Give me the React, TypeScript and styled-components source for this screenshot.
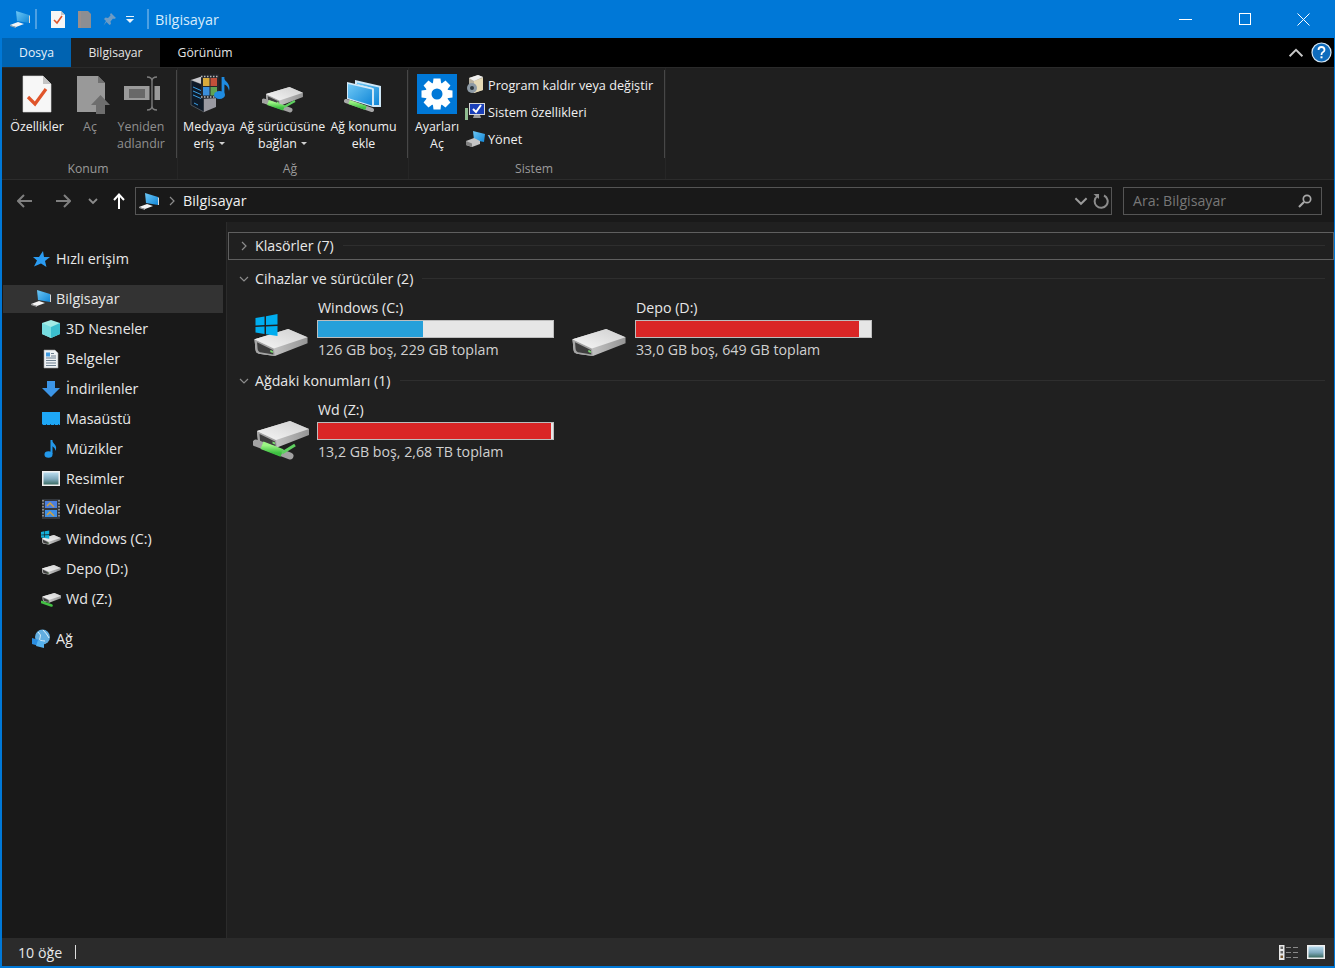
import React from "react";
import styled, { createGlobalStyle } from "styled-components";

const GlobalStyle = createGlobalStyle`
  html, body {
    margin: 0;
    padding: 0;
    background: #0078d7;
    font-family: "Open Sans", "Noto Sans", sans-serif;
    overflow: hidden;
  }
  * { box-sizing: border-box; }
  svg { display: block; flex: none; }
`;

const Window = styled.div`
  width: 1335px;
  height: 968px;
  display: flex;
  flex-direction: column;
  border-left: 2px solid #0078d7;
  border-right: 1px solid #0078d7;
  border-bottom: 2px solid #0078d7;
  background: #202020;
  color: #e8e8e8;
`;

/* title bar */
const TitleBar = styled.div`
  height: 38px;
  margin-left: -2px;
  margin-right: -1px;
  background: #0078d7;
  display: flex;
  align-items: center;
  flex: none;
`;
const QuickTools = styled.div`
  display: flex;
  align-items: center;
  padding-left: 10px;
`;
const TitleSep = styled.div<{ $l: number; $r: number }>`
  width: 2px;
  height: 20px;
  margin: 0 ${(p) => p.$r}px 0 ${(p) => p.$l}px;
  background: #4da0e3;
`;
const ToolSlot = styled.div<{ $w: number }>`
  width: ${(p) => p.$w}px;
  display: flex;
  justify-content: center;
`;
const TitleText = styled.div`
  flex: 1;
  font-size: 14.4px;
  color: #d6ebfb;
`;
const WinButtons = styled.div`
  display: flex;
  padding-right: 2px;
`;
const WinButton = styled.div`
  width: 59px;
  height: 38px;
  display: flex;
  align-items: center;
  justify-content: center;
`;

/* tabs */
const TabStrip = styled.div`
  height: 29px;
  flex: none;
  background: #000;
  display: flex;
  align-items: stretch;
  font-size: 12.2px;
`;
const Tab = styled.div<{ $kind?: "file" | "active"; $w: number }>`
  width: ${(p) => p.$w}px;
  display: flex;
  align-items: center;
  justify-content: center;
  color: ${(p) => (p.$kind === "file" ? "#e6f1fa" : "#e4e4e4")};
  background: ${(p) =>
    p.$kind === "file" ? "#0063b1" : p.$kind === "active" ? "#1f1f1f" : "#000"};
`;
const TabSpacer = styled.div`
  flex: 1;
`;
const TabRight = styled.div`
  display: flex;
  align-items: center;
  gap: 7px;
  padding-right: 2px;
`;

/* ribbon */
const Ribbon = styled.div`
  height: 113px;
  flex: none;
  background: #1f1f1f;
  border-top: 1px solid #2a2a2a;
  border-bottom: 1px solid #2c2c2c;
  display: flex;
`;
const Group = styled.div<{ $w: number }>`
  width: ${(p) => p.$w}px;
  display: flex;
  flex-direction: column;
  border-right: 1px solid #262626;
`;
const GroupBody = styled.div<{ $pad: number }>`
  height: 88px;
  margin-top: 2px;
  padding-left: ${(p) => p.$pad}px;
  display: flex;
  border-right: 1px solid #474747;
`;
const GroupLabel = styled.div<{ $shift: number }>`
  height: 21px;
  display: flex;
  align-items: center;
  justify-content: center;
  padding-right: ${(p) => p.$shift}px;
  font-size: 12.2px;
  color: #9a9a9a;
`;
const LargeButton = styled.div<{ $w: number; $dim?: boolean }>`
  width: ${(p) => p.$w}px;
  display: flex;
  flex-direction: column;
  align-items: center;
  font-size: 12.4px;
  line-height: 17px;
  text-align: center;
  white-space: nowrap;
  color: ${(p) => (p.$dim ? "#8f8f8f" : "#f0f0f0")};
`;
const LargeIcon = styled.div`
  height: 48px;
  padding-top: 4px;
`;
const Caret = styled.span`
  display: inline-block;
  width: 0;
  height: 0;
  margin: 0 0 3px 4px;
  border-left: 3px solid transparent;
  border-right: 3px solid transparent;
  border-top: 3px solid #d0d0d0;
`;
const SmallColumn = styled.div`
  display: flex;
  flex-direction: column;
  padding: 1px 0 0 3px;
`;
const SmallButton = styled.div`
  height: 27px;
  display: flex;
  align-items: center;
  gap: 3px;
  font-size: 12.7px;
  color: #f0f0f0;
  white-space: nowrap;
`;

/* address bar */
const AddressRow = styled.div`
  height: 42px;
  flex: none;
  background: #191919;
  display: flex;
  align-items: center;
  padding-right: 12px;
`;
const NavButtons = styled.div`
  width: 133px;
  padding-left: 15px;
  display: flex;
  align-items: center;
`;
const NavSlot = styled.div<{ $w: number }>`
  width: ${(p) => p.$w}px;
`;
const AddressBox = styled.div`
  width: 977px;
  height: 28px;
  border: 1px solid #555;
  display: flex;
  align-items: center;
  padding: 0 2px 0 3px;
  font-size: 14.3px;
  color: #f0f0f0;
`;
const AddressText = styled.div`
  flex: 1;
  padding: 0 0 2px 6px;
`;
const SearchBox = styled.div`
  width: 199px;
  height: 28px;
  margin-left: 11px;
  border: 1px solid #555;
  display: flex;
  align-items: center;
  justify-content: space-between;
  padding: 0 9px 1px;
  font-size: 14.2px;
  color: #777;
`;

/* main area */
const Main = styled.div`
  flex: 1;
  display: flex;
  min-height: 0;
`;
const Sidebar = styled.div`
  width: 225px;
  flex: none;
  background: #191919;
  border-right: 1px solid #2b2b2b;
  padding-top: 22px;
  display: flex;
  flex-direction: column;
`;
const NavSection = styled.div`
  margin-bottom: 10px;
`;
const NavRow = styled.div<{ $level: number; $selected?: boolean }>`
  height: 30px;
  display: flex;
  align-items: center;
  gap: 5px;
  padding-left: ${(p) => (p.$level === 1 ? 28 : 38)}px;
  padding-bottom: 1px;
  font-size: 14.3px;
  color: #e8e8e8;
  width: 220px;
  background: ${(p) =>
    p.$selected
      ? "linear-gradient(#191919 1px, #333 1px, #333 29px, #191919 29px)"
      : "none"};
  margin-left: 1px;
`;
const Content = styled.div`
  flex: 1;
  padding: 10px 0 0 1px;
  display: flex;
  flex-direction: column;
`;
const GroupHeader = styled.div<{ $framed?: boolean }>`
  height: 28px;
  flex: none;
  display: flex;
  align-items: center;
  padding: 0 8px 1px 10px;
  gap: 6px;
  font-size: 14.2px;
  color: #e8e8e8;
  border: 1px solid ${(p) => (p.$framed ? "#5f5f5f" : "transparent")};
  margin-bottom: 5px;
`;
const HeaderLine = styled.div`
  flex: 1;
  height: 1px;
  margin-left: 3px;
  background: #2e2e2e;
`;
const Tiles = styled.div`
  display: flex;
  margin-bottom: 7px;
  padding-left: 25px;
`;
const Tile = styled.div`
  width: 318px;
  height: 62px;
  display: flex;
`;
const TileIcon = styled.div`
  width: 64px;
  flex: none;
  padding-top: 15px;
`;
const TileText = styled.div`
  width: 237px;
  font-size: 14.2px;
  line-height: 20px;
  color: #e8e8e8;
`;
const TileName = styled.div`
  padding-left: 1px;
`;
const TileInfo = styled.div`
  padding-left: 1px;
  margin-top: 2px;
  color: #d0d0d0;
`;
const UsageBar = styled.div`
  height: 18px;
  margin-top: 2px;
  border: 1px solid #bdbdbd;
  background: #e6e6e6;
`;
const UsageFill = styled.div<{ $pct: number; $full?: boolean }>`
  height: 100%;
  width: ${(p) => p.$pct}%;
  background: ${(p) => (p.$full ? "#da2626" : "#26a0da")};
`;

/* status bar */
const StatusBar = styled.div`
  height: 28px;
  flex: none;
  background: #2b2b2b;
  display: flex;
  align-items: center;
  padding: 0 9px 0 16px;
  font-size: 14.2px;
  color: #e8e8e8;
`;
const StatusCaret = styled.div`
  width: 1px;
  height: 14px;
  background: #ddd;
  margin-left: 13px;
`;
const StatusSpacer = styled.div`
  flex: 1;
`;
const StatusViews = styled.div`
  display: flex;
  align-items: center;
  gap: 9px;
`;

/* drawings */
const Defs = styled.svg`
  position: absolute;
  width: 0;
  height: 0;
`;

const SharedDefs = () => (
  <Defs>
    <defs>
      <linearGradient id="screen" x1="0" y1="0" x2="1" y2="1">
        <stop offset="0" stopColor="#6fc8f5" />
        <stop offset="1" stopColor="#1187d8" />
      </linearGradient>
      <linearGradient id="driveTop" x1="0" y1="1" x2="1" y2="0">
        <stop offset="0" stopColor="#f6f6f6" />
        <stop offset="1" stopColor="#cfcfcf" />
      </linearGradient>
      <linearGradient id="driveSide" x1="0" y1="0" x2="1" y2="0">
        <stop offset="0" stopColor="#dcdcdc" />
        <stop offset="1" stopColor="#959595" />
      </linearGradient>
      <linearGradient id="pipe" x1="0" y1="0" x2="0" y2="1">
        <stop offset="0" stopColor="#9cf585" />
        <stop offset="1" stopColor="#3cbf40" />
      </linearGradient>
      <linearGradient id="sky" x1="0" y1="0" x2="0" y2="1">
        <stop offset="0" stopColor="#b9dcef" />
        <stop offset="0.55" stopColor="#7fa9bd" />
        <stop offset="1" stopColor="#3d6d63" />
      </linearGradient>
    </defs>
  </Defs>
);

// isometric drive body, 52 wide by 27 high
const DriveBody = () => (
  <g>
    <path d="M0 10 33 0 52 8 52 14 20 26.500 6 24.500Q1 24 1 20Z" fill="url(#driveSide)" />
    <path d="M0 10 19 19 20 26.500 6 24.500Q1 24 1 20Z" fill="#a4a4a4" />
    <path d="M2.500 13 18 20.500 18.500 25 7 23Q3 22.500 3 19Z" fill="#3e3e3e" />
    <path d="M0 10 33 0 52 8 19 19Z" fill="url(#driveTop)" />
    <path d="M15.500 20.500 18 21.500 18 23.500 15.500 22.500Z" fill="#7ddc72" />
  </g>
);

const WindowsPanes = () => (
  <g fill="#00adef" transform="translate(1.500 0)">
    <path d="M1 5 10 3.500 10 12 1 12.500Z" />
    <path d="M11.500 3.200 23 1 23 11.500 11.500 12Z" />
    <path d="M1 14 10 13.500 10 21 1 19.500Z" />
    <path d="M11.500 13.500 23 13 23 23 11.500 21.200Z" />
  </g>
);

const Pipe = () => (
  <g>
    <path d="M3 28 37 41" stroke="#a2a2a2" strokeWidth="7" strokeLinecap="round" />
    <path d="M9 30.300 29 38" stroke="url(#pipe)" strokeWidth="8" />
    <path d="M29 38 42 30" stroke="#5fd060" strokeWidth="3" />
  </g>
);

const BigDrive = ({ kind }: { kind: "win" | "plain" | "net" }) => (
  <svg width="60" height="46" viewBox="0 0 60 46">
    {kind === "net" ? (
      <>
        <g transform="translate(4 6)">
          <DriveBody />
        </g>
        <Pipe />
      </>
    ) : (
      <>
        <g transform="translate(1.500 16) scale(1.02)">
          <DriveBody />
        </g>
        {kind === "win" && <WindowsPanes />}
      </>
    )}
  </svg>
);

const ComputerIcon = ({ size = 20 }: { size?: number }) => (
  <svg width={size} height={size * 0.85} viewBox="0 0 20 17">
    <path d="M6 0 19 4 19 12 7 10Z" fill="url(#screen)" />
    <path d="M19 4 20 5 20 12 19 12Z" fill="#d8d8d8" />
    <path d="M0 14 8 11 14 13 6 16Z" fill="#f4f4f4" />
    <path d="M0 14 6 16 6 17 0 15Z" fill="#a8a8a8" />
  </svg>
);

const DocCheckIcon = () => (
  <svg width="14" height="17" viewBox="0 0 14 17">
    <path d="M0 0H10L14 4V17H0Z" fill="#f6f6f6" />
    <path d="M10 0V4H14Z" fill="#c4c4c4" />
    <path d="M3 9 6 12 11 5" fill="none" stroke="#e0552b" strokeWidth="1.600" />
  </svg>
);

const GreyDocIcon = () => (
  <svg width="13" height="17" viewBox="0 0 13 17">
    <path d="M0 0H10L13 3V17H0Z" fill="#8c8e92" />
    <path d="M0 0H3V17H0Z" fill="#9a8f8c" />
  </svg>
);

const PinIcon = () => (
  <svg width="13" height="13" viewBox="0 0 13 13">
    <path d="M8 0 13 5 11 6 10 5.500 7.500 8.500 8 11 6.500 12 3.500 9 0.500 12.500 3 8 1 6 2.500 4.500 5 5 7.500 2.500 7 1.500Z" fill="#6f9cc4" />
  </svg>
);

const QuickDropIcon = () => (
  <svg width="8" height="7" viewBox="0 0 8 7">
    <path d="M0 .5H8" stroke="#e8f3fc" strokeWidth="1" />
    <path d="M0 3H8L4 7Z" fill="#e8f3fc" />
  </svg>
);

const PropertiesLarge = () => (
  <svg width="40" height="40" viewBox="0 0 40 40">
    <path d="M6 2H26L34 10V38H6Z" fill="#f7f7f7" stroke="#d8d8d8" strokeWidth=".6" />
    <path d="M26 2V10H34Z" fill="#c4c4c4" />
    <path d="M11 23 18 30 29 15" fill="none" stroke="#e0552b" strokeWidth="3.200" />
  </svg>
);

const OpenLarge = () => (
  <svg width="40" height="40" viewBox="0 0 40 40">
    <path d="M7 2H28L35 9V38H7Z" fill="#999" />
    <path d="M28 2V9H35Z" fill="#707070" />
    <path d="M21 31 30.500 21 40 31H35V40H26V31Z" fill="#6e6e6e" />
  </svg>
);

const RenameLarge = () => (
  <svg width="40" height="40" viewBox="0 0 40 40">
    <path d="M3 12H39V26H3Z" fill="#9a9a9a" />
    <path d="M8 15H24V24H8Z" fill="#686868" />
    <path d="M31 5V35" stroke="#1f1f1f" strokeWidth="5" />
    <path d="M26 3Q31 3 31 7V32Q31 36 26 36M36 3Q31 3 31 7V32Q31 36 36 36" fill="none" stroke="#7d7d7d" strokeWidth="1.400" />
  </svg>
);

const MediaLarge = () => (
  <svg width="42" height="40" viewBox="0 0 42 40">
    <path d="M3 6 16 11V38L3 31Z" fill="#0f1a28" stroke="#5a5f66" strokeWidth=".8" />
    <path d="M16 11 28 7V33L16 38Z" fill="#9a9aa2" />
    <path d="M3 6 15 2 28 7 16 11Z" fill="#c8c8cc" />
    <path d="M5 13 13 16.500M5 17 13 20.500M5 21 13 24.500M6 29 10 31" stroke="#3aa0e6" strokeWidth="1" />
    <path d="M13 1 31 0V24L13 25Z" fill="#24272c" />
    <path d="M13 2.500H31M13 23H31" stroke="#b8b8b8" strokeWidth="1.400" strokeDasharray="1.500 1.500" />
    <path d="M15 4H21.500V12H15Z" fill="#d9a93a" />
    <path d="M22.500 4H29V12H22.500Z" fill="#c2503a" />
    <path d="M15 13H21.500V21.500H15Z" fill="#3b8fdc" />
    <path d="M22.500 13H29V21.500H22.500Z" fill="#5fa354" />
    <path d="M35 3V21" stroke="#1f8be0" strokeWidth="2.800" />
    <path d="M35 3C37 8 43 9 41 17 40 12 38 11 35 10Z" fill="#1f8be0" />
    <ellipse cx="31.500" cy="21" rx="5.500" ry="4" fill="#1f8be0" />
  </svg>
);

const NetDriveLarge = () => (
  <svg width="42" height="40" viewBox="0 0 42 40">
    <g transform="translate(4 13) scale(.71)">
      <DriveBody />
    </g>
    <path d="M2 27 28 36" stroke="#a2a2a2" strokeWidth="5" strokeLinecap="round" />
    <path d="M6 28.500 22 34" stroke="url(#pipe)" strokeWidth="5.500" />
    <path d="M22 33 33 27" stroke="#5fd060" strokeWidth="2" />
  </svg>
);

const NetPlaceLarge = () => (
  <svg width="40" height="40" viewBox="0 0 40 40">
    <path d="M11 6 37 12V33H29V15L11 10Z" fill="#cfe7f6" />
    <path d="M13 8.500 35 13.500V31H30V14.500L13 10Z" fill="url(#screen)" />
    <path d="M3 8 29 14V33L3 25Z" fill="#d3e9f7" />
    <path d="M4 10 28 15.500V31.500L4 24Z" fill="url(#screen)" />
    <path d="M2 27 28 36" stroke="#a8a8a8" strokeWidth="4" strokeLinecap="round" />
    <path d="M5 28 22 34" stroke="url(#pipe)" strokeWidth="4.500" />
  </svg>
);

const SettingsTile = () => (
  <svg width="40" height="40" viewBox="0 0 40 40">
    <rect width="40" height="40" fill="#0078d7" />
    <g transform="translate(20 20)" fill="#fff">
      {[0, 45, 90, 135, 180, 225, 270, 315].map((a) => (
        <path key={a} d="M-3.500 -15.500H3.500L4.500 -8H-4.500Z" transform={`rotate(${a})`} />
      ))}
    </g>
    <circle cx="20" cy="20" r="8.500" fill="none" stroke="#fff" strokeWidth="6" />
  </svg>
);

const UninstallIcon = () => (
  <svg width="20" height="19" viewBox="0 0 20 19">
    <path d="M4 3 13 0 18 2 18 15 9 18 4 16Z" fill="#b9b2a0" />
    <path d="M9 6 18 3 18 15 9 18Z" fill="#e5d9b5" />
    <path d="M4 3 13 0 18 2 9 6Z" fill="#eeeeee" />
    <circle cx="7" cy="13" r="5" fill="#8d9aa5" />
    <circle cx="7" cy="13" r="2" fill="#2f3940" />
  </svg>
);

const SystemIcon = () => (
  <svg width="20" height="19" viewBox="0 0 20 19">
    <path d="M4 1H20V13H4Z" fill="#d8d8d8" />
    <path d="M5 2H19V12H5Z" fill="#1a3fb8" />
    <path d="M8 7 11 10 16 3" fill="none" stroke="#fff" strokeWidth="2" />
    <path d="M9 13H15L16 16H8Z" fill="#9a9a9a" />
    <path d="M0 6H3V18H0Z" fill="#8fbc8f" />
  </svg>
);

const ManageIcon = () => (
  <svg width="20" height="18" viewBox="0 0 20 18">
    <path d="M8 1 20 4 19 12 9 10Z" fill="url(#screen)" />
    <path d="M1 11 9 8 15 11 15 14 7 17 1 15Z" fill="#c4c4c4" />
    <path d="M1 11 7 13.500 7 17 1 15Z" fill="#808080" />
  </svg>
);

const BackArrow = ({ flip, color = "#7f7f7f" }: { flip?: boolean; color?: string }) => (
  <svg width="16" height="14" viewBox="0 0 16 14" transform={flip ? "scale(-1 1)" : undefined}>
    <path d="M1 7H15M7 1 1 7 7 13" fill="none" stroke={color} strokeWidth="2" />
  </svg>
);

const Chevron = ({
  dir,
  color,
  size = 10,
  weight = 1.2,
}: {
  dir: "down" | "right" | "up";
  color: string;
  size?: number;
  weight?: number;
}) => (
  <svg width={size} height={size} viewBox="0 0 10 10">
    <path
      d={dir === "down" ? "M1 3 5 7 9 3" : dir === "up" ? "M1 7 5 3 9 7" : "M3 1 7 5 3 9"}
      fill="none"
      stroke={color}
      strokeWidth={weight}
    />
  </svg>
);

const UpArrow = () => (
  <svg width="12" height="16" viewBox="0 0 12 16">
    <path d="M6 16V2M1 7 6 1.500 11 7" fill="none" stroke="#fff" strokeWidth="2" />
  </svg>
);

const RefreshIcon = () => (
  <svg width="16" height="16" viewBox="0 0 16 16">
    <path d="M4.500 3A6.500 6.500 0 1 0 11 2.500" fill="none" stroke="#8c8c8c" strokeWidth="2" />
    <path d="M1.500 1 7 1 7 6Z" fill="#8c8c8c" transform="translate(-1 0)" />
  </svg>
);

const SearchGlyph = () => (
  <svg width="14" height="14" viewBox="0 0 14 14">
    <circle cx="9" cy="5" r="3.700" fill="none" stroke="#a8a8a8" strokeWidth="1.700" />
    <path d="M6 8 1 13" stroke="#a8a8a8" strokeWidth="2.200" />
  </svg>
);

const HelpBadge = () => (
  <svg width="21" height="21" viewBox="0 0 21 21">
    <circle cx="10.500" cy="10.500" r="9.500" fill="#0f6cbd" stroke="#d3e6f5" strokeWidth="1.200" />
    <path d="M7.500 8Q7.500 5 10.500 5T13.500 8Q13.500 9.500 11.500 10.500 10.500 11 10.500 13" fill="none" stroke="#fff" strokeWidth="1.800" />
    <rect x="9.500" y="14.300" width="2" height="2" fill="#fff" />
  </svg>
);

const StarIcon = () => (
  <svg width="20" height="20" viewBox="0 0 20 20">
    <path d="M12 2 13 8 19 8 14 12 15.500 18 10 14.500 3 17.500 6 11.500 2 8 8 8Z" fill="#2b9cf2" />
  </svg>
);

const CubeIcon = () => (
  <svg width="20" height="20" viewBox="0 0 20 20">
    <path d="M10 1 19 4 19 15 10 19 1 15 1 4Z" fill="#a2ece6" />
    <path d="M10 8 19 4 19 15 10 19Z" fill="#3bbfce" />
    <path d="M10 8 1 4 1 15 10 19Z" fill="#76dde0" />
  </svg>
);

const PaperIcon = () => (
  <svg width="20" height="20" viewBox="0 0 20 20">
    <path d="M3 1H14L17 4V19H3Z" fill="#eef2f5" stroke="#9a9a9a" strokeWidth=".6" />
    <path d="M5 9H15M5 11.500H15M5 14H15M5 16.500H15M10 4.500H13M10 7H15" stroke="#6d7f8f" strokeWidth="1" />
    <rect x="5" y="3.500" width="4" height="4" fill="#3f9ae0" />
  </svg>
);

const DownloadIcon = () => (
  <svg width="20" height="20" viewBox="0 0 20 20">
    <path d="M6 2H14V9H19L10 18 1 9H6Z" fill="#3c95e6" />
  </svg>
);

const DesktopIcon = () => (
  <svg width="20" height="20" viewBox="0 0 20 20">
    <path d="M1 3H19V16H1Z" fill="#1ea7f5" />
    <path d="M1 15.500H19" stroke="#10497a" strokeWidth="1" strokeDasharray="1 3" />
  </svg>
);

const NoteIcon = () => (
  <svg width="20" height="20" viewBox="0 0 20 20">
    <path d="M10.500 1V15" stroke="#2398ea" strokeWidth="2" />
    <path d="M10.500 1C12 5 17 6 14.500 12 14 8.500 12 7.500 10.500 7Z" fill="#2398ea" />
    <ellipse cx="7.500" cy="15.500" rx="4" ry="3.300" fill="#2398ea" />
  </svg>
);

const PictureIcon = () => (
  <svg width="20" height="20" viewBox="0 0 20 20">
    <rect x="1" y="2" width="18" height="15" fill="#f0f0f0" />
    <rect x="2.500" y="3.500" width="15" height="12" fill="url(#sky)" />
  </svg>
);

const FilmIcon = () => (
  <svg width="20" height="20" viewBox="0 0 20 20">
    <rect x="1" y="0" width="18" height="20" fill="#33373d" />
    <path d="M2 1V19M18 1V19" stroke="#8a8a8a" strokeWidth="2" strokeDasharray="1.500 1.500" />
    <rect x="4" y="2" width="12" height="7" fill="#4a7fe0" />
    <rect x="4" y="11" width="12" height="7" fill="#3f8fe6" />
    <path d="M6 7 9 4 13 8M6 16 9 13 13 17" stroke="#d3a03c" strokeWidth="1.500" fill="none" />
  </svg>
);

const SmallDrive = ({ kind }: { kind: "win" | "plain" | "net" }) => (
  <svg width="20" height="20" viewBox="0.500 0 20 20">
    <g transform={kind === "net" ? "translate(2 4) scale(.36)" : "translate(1.500 6) scale(.36)"}>
      <DriveBody />
    </g>
    {kind === "win" && (
      <g transform="translate(0 1) scale(.38)">
        <path d="M1 5 10 3.500 10 12 1 12.500ZM11.500 3.200 23 1 23 11.500 11.500 12ZM1 14 10 13.500 10 21 1 19.500ZM11.500 13.500 23 13 23 23 11.500 21.200Z" fill="#15b0d8" />
      </g>
    )}
    {kind === "net" && <path d="M1 13 11 16.500" stroke="#43c044" strokeWidth="2.500" strokeLinecap="round" />}
  </svg>
);

const NetworkIcon = () => (
  <svg width="20" height="20" viewBox="0 0 20 20">
    <circle cx="11.500" cy="8" r="7.500" fill="#62aee0" />
    <path d="M7 3Q11 6 9 9T14 12M12 1Q16 5 18 9" fill="none" stroke="#d8eefa" strokeWidth="1" />
    <path d="M1 9 8 11V17L1 15Z" fill="#2a8de0" />
    <path d="M5 17 13 19 13 13 7 11Z" fill="#55b2ef" />
  </svg>
);

const DetailsViewIcon = () => (
  <svg width="19" height="15" viewBox="0 0 19 15">
    <rect x="0" y="0" width="5.500" height="15" fill="#e8e8e8" />
    <rect x="1.500" y="1.500" width="2.500" height="2.500" fill="#666" />
    <rect x="1.500" y="6" width="2.500" height="2.500" fill="#666" />
    <rect x="1.500" y="10.500" width="2.500" height="2.500" fill="#7a5a32" />
    <path d="M7 2.500H12M14 2.500H19M7 7.500H12M14 7.500H19M7 12.500H12M14 12.500H19" stroke="#8a8a8a" strokeWidth="1" />
  </svg>
);

const TilesViewIcon = () => (
  <svg width="18" height="14" viewBox="0 0 18 14">
    <rect width="18" height="14" fill="#f0f0f0" />
    <rect x="1.500" y="1.500" width="15" height="11" fill="url(#sky)" />
  </svg>
);

const navItems: { label: string; icon: React.ReactNode }[] = [
  { label: "3D Nesneler", icon: <CubeIcon /> },
  { label: "Belgeler", icon: <PaperIcon /> },
  { label: "İndirilenler", icon: <DownloadIcon /> },
  { label: "Masaüstü", icon: <DesktopIcon /> },
  { label: "Müzikler", icon: <NoteIcon /> },
  { label: "Resimler", icon: <PictureIcon /> },
  { label: "Videolar", icon: <FilmIcon /> },
  { label: "Windows (C:)", icon: <SmallDrive kind="win" /> },
  { label: "Depo (D:)", icon: <SmallDrive kind="plain" /> },
  { label: "Wd (Z:)", icon: <SmallDrive kind="net" /> },
];

interface DriveProps {
  name: string;
  info: string;
  used: number;
  full?: boolean;
  kind: "win" | "plain" | "net";
}

const DriveTile = ({ name, info, used, full, kind }: DriveProps) => (
  <Tile>
    <TileIcon>
      <BigDrive kind={kind} />
    </TileIcon>
    <TileText>
      <TileName>{name}</TileName>
      <UsageBar>
        <UsageFill $pct={used} $full={full} />
      </UsageBar>
      <TileInfo>{info}</TileInfo>
    </TileText>
  </Tile>
);

const App = () => {
  return (
    <Window>
      <GlobalStyle />
      <SharedDefs />
      <TitleBar>
        <QuickTools>
          <ComputerIcon />
          <TitleSep $l={5} $r={8} />
          <ToolSlot $w={26}>
            <DocCheckIcon />
          </ToolSlot>
          <ToolSlot $w={26}>
            <GreyDocIcon />
          </ToolSlot>
          <ToolSlot $w={24}>
            <PinIcon />
          </ToolSlot>
          <ToolSlot $w={18}>
            <QuickDropIcon />
          </ToolSlot>
          <TitleSep $l={8} $r={6} />
        </QuickTools>
        <TitleText>Bilgisayar</TitleText>
        <WinButtons>
          <WinButton>
            <svg width="13" height="1" viewBox="0 0 13 1">
              <rect width="13" height="1" fill="#fff" />
            </svg>
          </WinButton>
          <WinButton>
            <svg width="12" height="12" viewBox="0 0 12 12">
              <rect x=".5" y=".5" width="11" height="11" fill="none" stroke="#fff" />
            </svg>
          </WinButton>
          <WinButton>
            <svg width="13" height="13" viewBox="0 0 13 13">
              <path d="M.5.5 12.500 12.500M12.500.5.5 12.500" stroke="#fff" strokeWidth="1" />
            </svg>
          </WinButton>
        </WinButtons>
      </TitleBar>

      <TabStrip>
        <Tab $kind="file" $w={69}>Dosya</Tab>
        <Tab $kind="active" $w={89}>Bilgisayar</Tab>
        <Tab $w={90}>Görünüm</Tab>
        <TabSpacer />
        <TabRight>
          <Chevron dir="up" color="#c8c8c8" size={16} />
          <HelpBadge />
        </TabRight>
      </TabStrip>

      <Ribbon>
        <Group $w={176}>
          <GroupBody $pad={6}>
            <LargeButton $w={58}>
              <LargeIcon><PropertiesLarge /></LargeIcon>
              Özellikler
            </LargeButton>
            <LargeButton $w={48} $dim>
              <LargeIcon><OpenLarge /></LargeIcon>
              Aç
            </LargeButton>
            <LargeButton $w={54} $dim>
              <LargeIcon><RenameLarge /></LargeIcon>
              Yeniden
              <br />
              adlandır
            </LargeButton>
          </GroupBody>
          <GroupLabel $shift={3}>Konum</GroupLabel>
        </Group>
        <Group $w={231}>
          <GroupBody $pad={3}>
            <LargeButton $w={56}>
              <LargeIcon><MediaLarge /></LargeIcon>
              Medyaya
              <span>eriş<Caret /></span>
            </LargeButton>
            <LargeButton $w={91}>
              <LargeIcon><NetDriveLarge /></LargeIcon>
              Ağ sürücüsüne
              <span>bağlan<Caret /></span>
            </LargeButton>
            <LargeButton $w={71}>
              <LargeIcon><NetPlaceLarge /></LargeIcon>
              Ağ konumu
              <br />
              ekle
            </LargeButton>
          </GroupBody>
          <GroupLabel $shift={6}>Ağ</GroupLabel>
        </Group>
        <Group $w={257}>
          <GroupBody $pad={3}>
            <LargeButton $w={50}>
              <LargeIcon><SettingsTile /></LargeIcon>
              Ayarları
              <br />
              Aç
            </LargeButton>
            <SmallColumn>
              <SmallButton><UninstallIcon />Program kaldır veya değiştir</SmallButton>
              <SmallButton><SystemIcon />Sistem özellikleri</SmallButton>
              <SmallButton><ManageIcon />Yönet</SmallButton>
            </SmallColumn>
          </GroupBody>
          <GroupLabel $shift={6}>Sistem</GroupLabel>
        </Group>
      </Ribbon>

      <AddressRow>
        <NavButtons>
          <BackArrow />
          <NavSlot $w={22} />
          <BackArrow flip />
          <NavSlot $w={17} />
          <Chevron dir="down" color="#8c8c8c" weight={1.8} />
          <NavSlot $w={15} />
          <UpArrow />
        </NavButtons>
        <AddressBox>
          <ComputerIcon />
          <NavSlot $w={8} />
          <Chevron dir="right" color="#8c8c8c" />
          <AddressText>Bilgisayar</AddressText>
          <Chevron dir="down" color="#9a9a9a" size={14} weight={1.4} />
          <NavSlot $w={5} />
          <RefreshIcon />
        </AddressBox>
        <SearchBox>
          Ara: Bilgisayar
          <SearchGlyph />
        </SearchBox>
      </AddressRow>

      <Main>
        <Sidebar>
          <NavSection>
            <NavRow $level={1}><StarIcon />Hızlı erişim</NavRow>
          </NavSection>
          <NavSection>
            <NavRow $level={1} $selected><ComputerIcon />Bilgisayar</NavRow>
            {navItems.map((item) => (
              <NavRow key={item.label} $level={2}>
                {item.icon}
                {item.label}
              </NavRow>
            ))}
          </NavSection>
          <NavSection>
            <NavRow $level={1}><NetworkIcon />Ağ</NavRow>
          </NavSection>
        </Sidebar>
        <Content>
          <GroupHeader $framed>
            <Chevron dir="right" color="#8c8c8c" />
            Klasörler (7)
            <HeaderLine />
          </GroupHeader>
          <GroupHeader>
            <Chevron dir="down" color="#8c8c8c" />
            Cihazlar ve sürücüler (2)
            <HeaderLine />
          </GroupHeader>
          <Tiles>
            <DriveTile name="Windows (C:)" info="126 GB boş, 229 GB toplam" used={44.7} kind="win" />
            <DriveTile name="Depo (D:)" info="33,0 GB boş, 649 GB toplam" used={95} full kind="plain" />
          </Tiles>
          <GroupHeader>
            <Chevron dir="down" color="#8c8c8c" />
            Ağdaki konumları (1)
            <HeaderLine />
          </GroupHeader>
          <Tiles>
            <DriveTile name="Wd (Z:)" info="13,2 GB boş, 2,68 TB toplam" used={99} full kind="net" />
          </Tiles>
        </Content>
      </Main>

      <StatusBar>
        10 öğe
        <StatusCaret />
        <StatusSpacer />
        <StatusViews>
          <DetailsViewIcon />
          <TilesViewIcon />
        </StatusViews>
      </StatusBar>
    </Window>
  );
};

export default App;
